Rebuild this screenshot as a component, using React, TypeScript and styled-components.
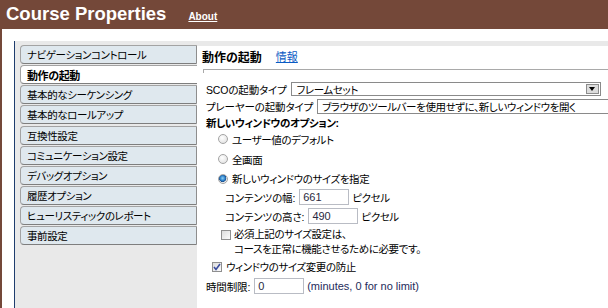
import React from "react";
import styled, { createGlobalStyle } from "styled-components";

const GlobalStyle = createGlobalStyle`
  html, body {
    margin: 0;
    padding: 0;
    background: #fff;
  }
  body {
    font-family: "Liberation Sans", "Noto Sans CJK JP", sans-serif;
    font-size: 10.5px;
    letter-spacing: -0.4px;
    color: #000;
    font-feature-settings: "palt";
  }
`;

const tabs = [
  "ナビゲーションコントロール",
  "動作の起動",
  "基本的なシーケンシング",
  "基本的なロールアップ",
  "互換性設定",
  "コミュニケーション設定",
  "デバッグオプション",
  "履歴オプション",
  "ヒューリスティックのレポート",
  "事前設定",
];

const Radio = ({ checked }: { checked?: boolean }) => (
  <RadioMark $checked={checked} />
);

const Check = ({ checked }: { checked?: boolean }) => (
  <CheckBox>
    {checked && (
      <svg width="8" height="8" viewBox="0 0 8 8">
        <polyline
          points="1,4 3,6.5 7,1"
          fill="none"
          stroke="#3a4c9e"
          strokeWidth="1.6"
        />
      </svg>
    )}
  </CheckBox>
);

export default function App() {
  return (
    <Page>
      <GlobalStyle />
      <Header>
        <Title>Course Properties</Title>
        <AboutLink>About</AboutLink>
      </Header>
      <Gap />
      <Main>
        <Nav>
          {tabs.map((t, i) => (
            <Tab key={t} $active={i === 1}>
              {t}
            </Tab>
          ))}
        </Nav>
        <Content>
          <HeadingRow>
            <Heading>動作の起動</Heading>
            <InfoLink>情報</InfoLink>
          </HeadingRow>
          <Divider />
          <Row $h={14} $top={9}>
            <Label>SCOの起動タイプ</Label>
            <Select>
              <span>フレームセット</span>
              <DropButton>
                <Arrow />
              </DropButton>
            </Select>
          </Row>
          <Row $h={14} $top={3}>
            <Label>プレーヤーの起動タイプ</Label>
            <WideInput>ブラウザのツールバーを使用せずに、新しいウィンドウを開く</WideInput>
          </Row>
          <Row $h={14} $top={2}>
            <Bold>新しいウィンドウのオプション:</Bold>
          </Row>
          <Row $h={20} $indent={12}>
            <Radio />
            <OptText>ユーザー値のデフォルト</OptText>
          </Row>
          <Row $h={20} $indent={12}>
            <Radio />
            <OptText>全画面</OptText>
          </Row>
          <Row $h={19} $indent={12}>
            <Radio checked />
            <OptText>新しいウィンドウのサイズを指定</OptText>
          </Row>
          <Row $h={18} $indent={19}>
            <Label>コンテンツの幅:</Label>
            <SmallInput>661</SmallInput>
            <Unit>ピクセル</Unit>
          </Row>
          <Row $h={18} $indent={19} $top={1}>
            <Label>コンテンツの高さ:</Label>
            <SmallInput>490</SmallInput>
            <Unit>ピクセル</Unit>
          </Row>
          <CheckRow $indent={15} $top={5}>
            <Check />
            <CheckText>
              必須上記のサイズ設定は、
              <br />
              コースを正常に機能させるために必要です。
            </CheckText>
          </CheckRow>
          <Row $h={17} $indent={6} $top={1}>
            <Check checked />
            <OptText>ウィンドウのサイズ変更の防止</OptText>
          </Row>
          <Row $h={18} $indent={0} $top={2}>
            <Label>時間制限:</Label>
            <SmallInput>0</SmallInput>
            <Hint>(minutes, 0 for no limit)</Hint>
          </Row>
        </Content>
      </Main>
    </Page>
  );
}

const Page = styled.div`
  width: 608px;
  height: 308px;
  border-left: 2px solid #744839;
  box-sizing: border-box;
  display: flex;
  flex-direction: column;
  overflow: hidden;
`;

const Header = styled.div`
  height: 29px;
  margin-left: -2px;
  background: #744839;
  display: flex;
  align-items: center;
  padding-left: 6px;
  flex-shrink: 0;
  letter-spacing: 0;
`;

const Title = styled.div`
  font-family: "Liberation Sans", Arial, sans-serif;
  font-weight: bold;
  font-size: 18.5px;
  color: #fff;
  margin-top: -2px;
`;

const AboutLink = styled.a`
  font-family: "Liberation Sans", Arial, sans-serif;
  font-weight: bold;
  font-size: 10px;
  color: #fff;
  text-decoration: underline;
  margin-left: 22px;
  margin-top: 3px;
`;

const Gap = styled.div`
  height: 12px;
  flex-shrink: 0;
`;

const Main = styled.div`
  flex: 1;
  margin-left: 12px;
  border-left: 1px solid #1f3d6e;
  background: #e9e9e9;
  display: flex;
  align-items: flex-start;
`;

const Nav = styled.div`
  width: 177px;
  margin-left: 5px;
  padding-top: 4px;
  display: flex;
  flex-direction: column;
  gap: 1.15px;
`;

const Tab = styled.div<{ $active?: boolean }>`
  height: 19px;
  box-sizing: border-box;
  display: flex;
  align-items: center;
  padding-left: 6px;
  border: 1px solid #a3a3a3;
  border-bottom-color: #7e7e7e;
  border-right: ${(p) => (p.$active ? "none" : "1px solid #8e8e8e")};
  border-radius: 4px 0 0 4px;
  background: ${(p) => (p.$active ? "#fff" : "#dfe8ee")};
  font-weight: ${(p) => (p.$active ? "bold" : "normal")};
  font-size: ${(p) => (p.$active ? "11px" : "10.5px")};
  white-space: nowrap;
  margin-right: ${(p) => (p.$active ? "-1px" : "0")};
`;

const Content = styled.div`
  flex: 1;
  align-self: stretch;
  margin-top: 5px;
  background: #fff;
  display: flex;
  flex-direction: column;
  padding-left: 5px;
`;

const HeadingRow = styled.div`
  height: 20px;
  display: flex;
  align-items: center;
`;

const Heading = styled.span`
  font-weight: bold;
  font-size: 12px;
  letter-spacing: 0;
`;

const InfoLink = styled.a`
  color: #0a5bc4;
  text-decoration: underline;
  margin-left: 14px;
  font-size: 11px;
  letter-spacing: 0;
`;

const Divider = styled.div`
  margin-top: 3px;
  margin-left: 1px;
  height: 3px;
  border-top: 1px solid #a9a9a9;
  border-left: 1px solid #a9a9a9;
`;

const Row = styled.div<{ $h: number; $top?: number; $indent?: number }>`
  height: ${(p) => p.$h}px;
  margin-top: ${(p) => p.$top ?? 0}px;
  padding-left: ${(p) => 4 + (p.$indent ?? 0)}px;
  display: flex;
  align-items: center;
  white-space: nowrap;
`;

const Label = styled.span`
  margin-right: 4px;
  letter-spacing: -0.15px;
`;

const Select = styled.div`
  width: 310px;
  height: 14px;
  box-sizing: border-box;
  border: 1px solid #8a8a8a;
  display: flex;
  align-items: center;
  justify-content: space-between;
  padding-left: 5px;
  padding-right: 1px;
`;

const DropButton = styled.span`
  width: 13px;
  height: 10px;
  box-sizing: border-box;
  border: 1px solid #8c8c8c;
  background: #dcdcdc;
  display: flex;
  align-items: center;
  justify-content: center;
`;

const Arrow = styled.span`
  width: 0;
  height: 0;
  border-left: 3.5px solid transparent;
  border-right: 3.5px solid transparent;
  border-top: 4px solid #000;
`;

const WideInput = styled.div`
  flex: 1;
  height: 15px;
  box-sizing: border-box;
  border: 1px solid #8a8a8a;
  border-right: none;
  padding-left: 4px;
  display: flex;
  align-items: center;
`;

const Bold = styled.span`
  font-weight: bold;
`;

const RadioMark = styled.span<{ $checked?: boolean }>`
  width: 10px;
  height: 10px;
  box-sizing: border-box;
  border-radius: 50%;
  border: 1px solid #a4a4a4;
  background: ${(p) =>
    p.$checked
      ? "radial-gradient(circle at 45% 40%, #8fd0f5 0, #2a7fc8 2.5px, #1c4f8e 3.5px, #e8e8e8 4px, #f8f8f8 100%)"
      : "radial-gradient(circle at 40% 35%, #ffffff 0, #e6e6e6 70%, #d6d6d6 100%)"};
  flex-shrink: 0;
`;

const CheckBox = styled.span`
  width: 10px;
  height: 10px;
  box-sizing: border-box;
  border: 1px solid #8f8f8f;
  background: linear-gradient(135deg, #dcdcdc, #fbfbfb);
  display: flex;
  align-items: center;
  justify-content: center;
  flex-shrink: 0;
`;

const OptText = styled.span`
  margin-left: 4px;
`;

const SmallInput = styled.div`
  width: 50px;
  height: 16px;
  box-sizing: border-box;
  border: 1px solid #b9bcc4;
  padding-left: 3px;
  display: flex;
  align-items: center;
  font-family: "Liberation Sans", Arial, sans-serif;
  font-size: 11px;
  letter-spacing: 0;
  color: #2a2a40;
`;

const Unit = styled.span`
  margin-left: 3px;
`;

const Hint = styled.span`
  margin-left: 3px;
  font-family: "Liberation Sans", Arial, sans-serif;
  font-size: 11px;
  letter-spacing: 0;
  color: #1e2a5a;
`;

const CheckRow = styled.div<{ $indent: number; $top: number }>`
  margin-top: ${(p) => p.$top}px;
  padding-left: ${(p) => 4 + p.$indent}px;
  display: flex;
  align-items: flex-start;
`;

const CheckText = styled.div`
  margin-left: 3px;
  line-height: 15px;
  margin-top: -3px;
`;
